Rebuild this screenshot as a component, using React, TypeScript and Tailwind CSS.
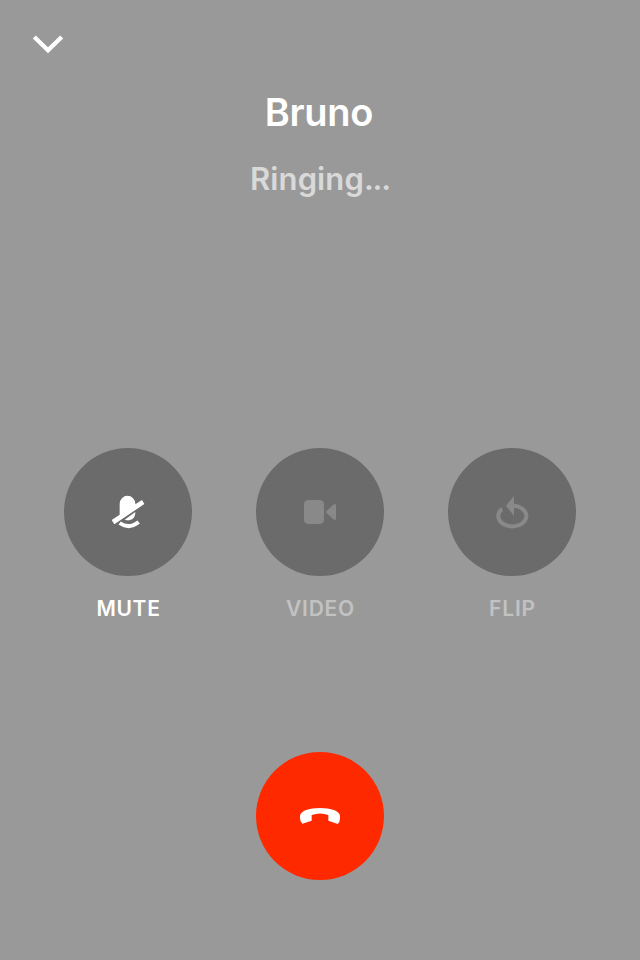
import type { ReactNode } from "react";

function Control({ label, active, children }: { label: string; active?: boolean; children: ReactNode }) {
  return (
    <button className="flex w-32 flex-col items-center">
      <span className="flex size-32 items-center justify-center rounded-full bg-[#6b6b6b]">
        <svg viewBox="-12 -15 192 192" className={active ? "size-16 text-white" : "size-16 text-[#898989]"}>
          {children}
        </svg>
      </span>
      <span
        className={
          "mt-[17px] pl-px text-[21px] leading-8 font-semibold " +
          (active ? "tracking-[0.7px] text-white" : "tracking-[0.8px] text-[#c2c2c2]")
        }
      >
        {label}
      </span>
    </button>
  );
}

export default function App() {
  return (
    <main className="flex h-[960px] w-[640px] flex-col items-center bg-[#999999] font-['Inter','Liberation_Sans',sans-serif]">
      <header className="flex h-[88px] w-full items-start pt-7 pl-8">
        <svg viewBox="0 0 32 32" className="size-8" fill="none" stroke="white" strokeWidth="4.4">
          <path d="M2.3 9 16 22.3 29.7 9" />
        </svg>
      </header>
      <h1 className="pr-0.5 text-[38px] leading-12 font-semibold tracking-[-0.25px] text-white">Bruno</h1>
      <p className="mt-[23px] text-[31px] leading-10 font-semibold tracking-[0.1px] text-[#d9d9d9]">
        Ringing<span className="tracking-[-1.2px]">...</span>
      </p>
      <section className="mt-[249px] flex w-full justify-between px-16">
        <Control label="MUTE" active>
          <path fill="currentColor" d="M59 89V56a23.5 23.5 0 0 1 47 0v2L126 45l7 12L43 118l-8-13Z" />
          <path fill="currentColor" d="M106 81C106 98 96 106 84 106q-5 0-10-2Z" />
          <path fill="none" stroke="currentColor" strokeWidth="12" d="M59 114Q86 134 116 111" />
        </Control>
        <Control label="VIDEO">
          <rect x="36" y="45" width="60" height="72" rx="13" fill="currentColor" />
          <path fill="currentColor" d="M101 81 124 59q8-5 8 3v38q0 8-8 3Z" />
        </Control>
        <Control label="FLIP">
          <path fill="none" stroke="currentColor" strokeWidth="12" d="M54 72A42 31 0 1 0 84 62" />
          <path fill="currentColor" d="M54 66V79L47 74Z" />
          <path fill="currentColor" d="M66 62 90 33V92Z" />
        </Control>
      </section>
      <button className="mt-[127px] flex size-32 items-center justify-center rounded-full bg-[#ff2900]">
        <svg viewBox="-12 -18 192 192" className="size-16" fill="white">
          <path d="M31 101Q24 96 24 85V79C24 62 52 54 84 54S144 62 144 79v6q0 12-7 17L109 92V75Q84 66 59 75V92Z" />
        </svg>
      </button>
    </main>
  );
}
